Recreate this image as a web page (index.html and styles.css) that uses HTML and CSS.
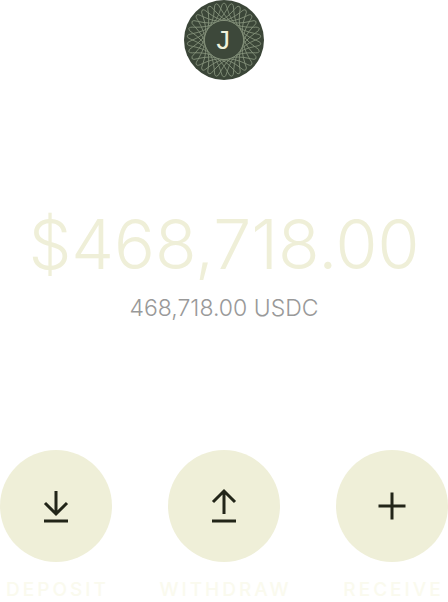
FILE: index.html
```html
<!DOCTYPE html>
<html lang="en">
<head>
<meta charset="utf-8">
<meta name="viewport" content="width=device-width, initial-scale=1">
<title>Balance</title>
<link rel="stylesheet" href="styles.css">
</head>
<body>
<main class="wallet">
  <svg class="avatar" viewBox="0 0 80 80" role="img" aria-label="Account J">
    <defs>
      <path id="loop" d="M27 26Q33 21 37 8Q38 3 40 3Q42 3 43 8Q47 21 53 26"/>
      <g id="pair"><use href="#loop"/><use href="#loop" transform="rotate(12 40 40)"/></g>
      <g id="group"><use href="#pair"/><use href="#pair" transform="rotate(24 40 40)"/><use href="#loop" transform="rotate(48 40 40)"/></g>
    </defs>
    <circle class="avatar-base" cx="40" cy="40" r="40"/>
    <g class="avatar-lines">
      <use href="#group"/>
      <use href="#group" transform="rotate(60 40 40)"/>
      <use href="#group" transform="rotate(120 40 40)"/>
      <use href="#group" transform="rotate(180 40 40)"/>
      <use href="#group" transform="rotate(240 40 40)"/>
      <use href="#group" transform="rotate(300 40 40)"/>
    </g>
    <circle class="avatar-core" cx="40" cy="40" r="19"/>
    <text class="avatar-letter" x="39" y="49" text-anchor="middle">J</text>
  </svg>
  <section class="balance">
    <h1 class="amount">$468,718.00</h1>
    <p class="token">468,718.00 USDC</p>
  </section>
  <nav class="actions" aria-label="Account actions">
    <div class="action">
      <button class="action-button" type="button" aria-labelledby="deposit">
        <svg class="icon" viewBox="0 0 40 40"><path d="M20 5v23M9 17l11 11 11-11M8 35h24"/></svg>
      </button>
      <span class="action-label" id="deposit">DEPOSIT</span>
    </div>
    <div class="action">
      <button class="action-button" type="button" aria-labelledby="withdraw">
        <svg class="icon" viewBox="0 0 40 40"><path d="M20 28V5M9 16L20 5l11 11M8 35h24"/></svg>
      </button>
      <span class="action-label" id="withdraw">WITHDRAW</span>
    </div>
    <div class="action">
      <button class="action-button" type="button" aria-labelledby="receive">
        <svg class="icon" viewBox="0 0 40 40"><path d="M20 6.500v27M6.500 20h27"/></svg>
      </button>
      <span class="action-label" id="receive">RECEIVE</span>
    </div>
  </nav>
</main>
</body>
</html>
```
FILE: styles.css
```css
* {
  box-sizing: border-box;
}

body {
  margin: 0;
  background: #fff;
  font-family: Inter, "Liberation Sans", sans-serif;
}

.wallet {
  display: flex;
  flex-direction: column;
  align-items: center;
}

.avatar {
  display: block;
  width: 80px;
  height: 80px;
}

.avatar-base {
  fill: #3b4638;
}

.avatar-core {
  fill: #3d483a;
}

.avatar-lines {
  fill: none;
  stroke: #87947d;
  stroke-width: 0.8;
}

.avatar-letter {
  fill: #f0f2dc;
  font-family: "Liberation Mono", monospace;
  font-size: 28px;
}

.balance {
  padding: 124px 0;
  text-align: center;
}

.amount {
  margin: 0;
  color: #efefd8;
  font-size: 68px;
  font-weight: 300;
  line-height: 80px;
}

.token {
  margin: 8px 0 0;
  padding-bottom: 2px;
  color: #999;
  font-size: 23px;
  font-weight: 300;
  line-height: 32px;
}

.actions {
  display: flex;
  justify-content: space-between;
  width: 100%;
}

.action {
  display: flex;
  flex-direction: column;
  align-items: center;
  gap: 16px;
  width: 112px;
}

.action-button {
  display: grid;
  place-items: center;
  width: 112px;
  height: 112px;
  padding: 0;
  border: 0;
  border-radius: 50%;
  background: #efefd8;
  color: #222518;
}

.icon {
  width: 40px;
  height: 40px;
  fill: none;
  stroke: currentColor;
  stroke-width: 3;
}

.action-label {
  padding-left: 3px;
  color: #fafaee;
  font-size: 19px;
  font-weight: 500;
  letter-spacing: 3px;
  line-height: 24px;
}
```
